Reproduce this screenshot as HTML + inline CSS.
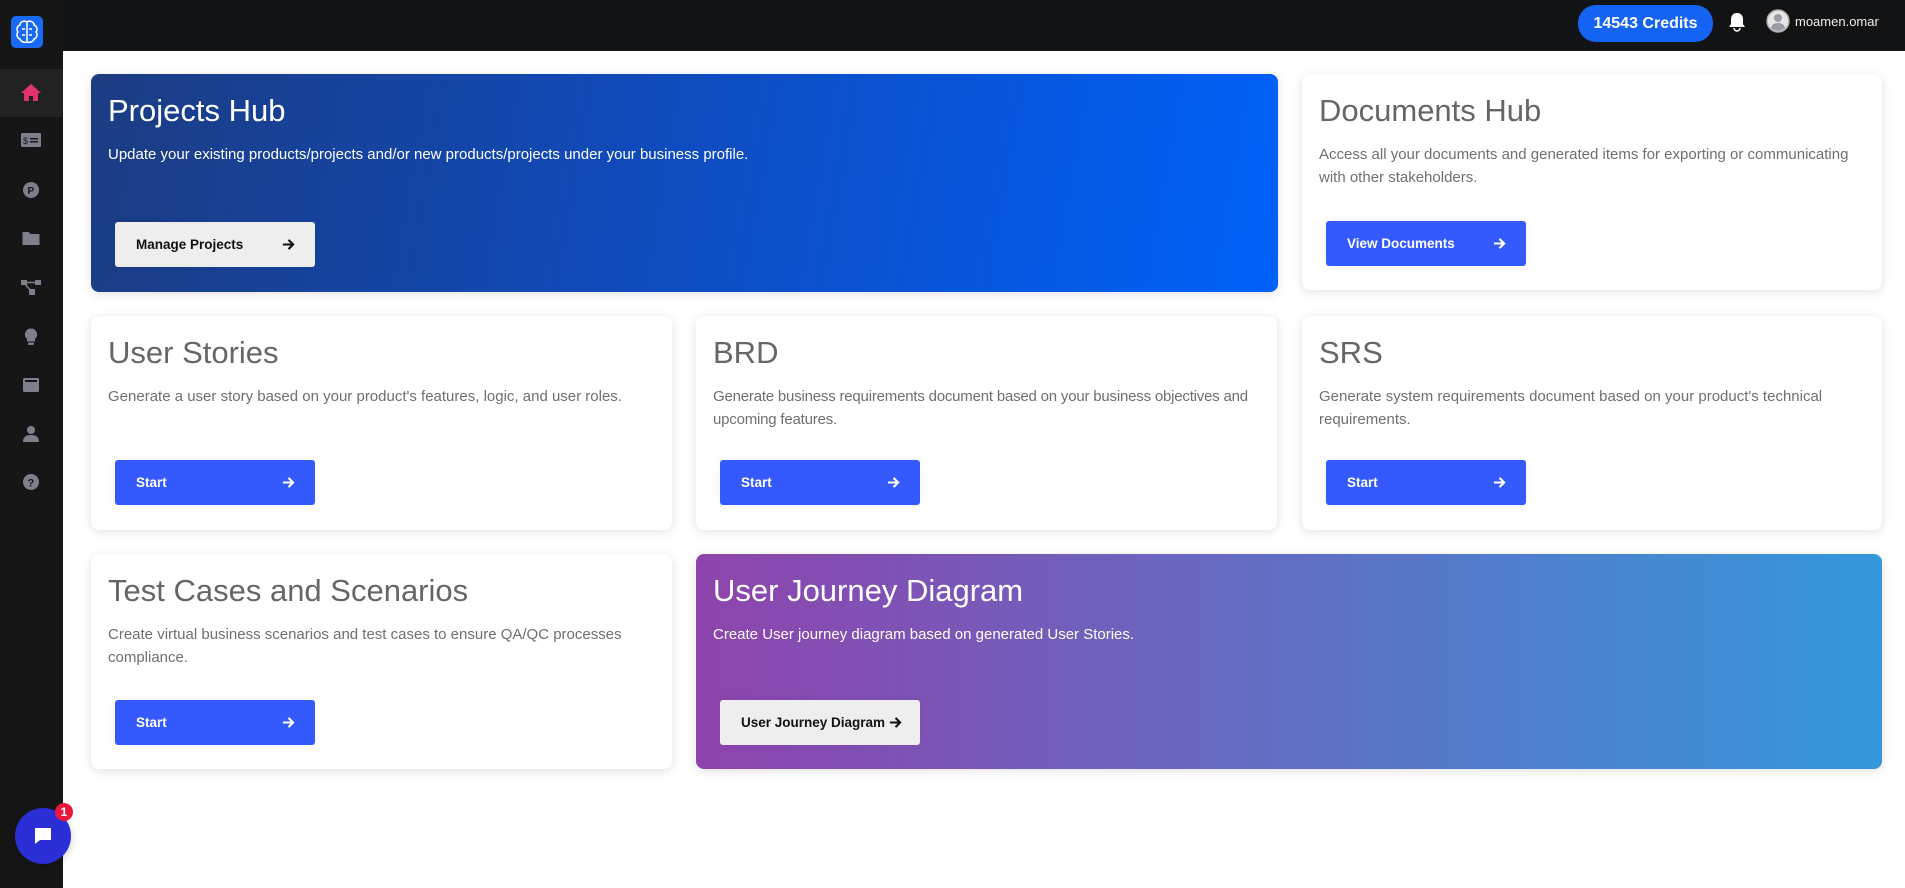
<!DOCTYPE html>
<html><head><meta charset="utf-8"><style>
*{box-sizing:border-box;margin:0;padding:0}
body{width:1905px;height:888px;overflow:hidden;background:#fff;font-family:"Liberation Sans",Arial,sans-serif;position:relative}
.hdr{position:absolute;left:0;top:0;width:1905px;height:51px;background:#121315}
.side{position:absolute;left:0;top:0;width:63px;height:888px;background:#161616}
.card{position:absolute;background:#fff;border-radius:8px;box-shadow:0 2px 10px rgba(0,0,0,.12)}
.card h2{position:absolute;left:17px;top:19px;font-size:31px;font-weight:normal;color:#666;white-space:nowrap}
.card p{position:absolute;left:17px;top:69px;right:8px;font-size:15px;line-height:23px;color:#6f6f6f}
.btn{position:absolute;left:24px;width:200px;height:45px;border-radius:3px;background:#3459fd;color:#fff;font-size:13.5px;font-weight:bold;padding-left:21px;line-height:45px;box-shadow:0 0 10px rgba(0,0,0,.05)}
.btn svg{position:absolute;right:20px;top:16px}
.btn.l{background:#eee;color:#111}
.grad h2,.grad p{color:#fff}
.ico{position:absolute;left:31px;transform:translate(-50%,-50%)}
</style></head><body>
<div class="hdr"></div>
<div class="side"></div>
<div style="position:absolute;left:11px;top:16px;width:32px;height:32px;background:#1a6af5;border-radius:5px"></div>
<svg style="position:absolute;left:13px;top:18px" width="28" height="28" viewBox="0 0 28 28" fill="none" stroke="#fff" stroke-width="1.5"><path d="M14 4v20M14 4c-3-2-7 0-7 3-3 1-4 5-2 7-2 2-1 6 2 7 1 3 5 4 7 3M14 4c3-2 7 0 7 3 3 1 4 5 2 7 2 2 1 6-2 7-1 3-5 4-7 3M9 11h3M16 11h3M9 17h3M16 17h3"/></svg>
<div style="position:absolute;left:0;top:69px;width:63px;height:48px;background:#222"></div>
<svg class="ico" style="top:92px" width="20" height="18" viewBox="0 0 20 18"><path d="M10 1L0 10h3v8h5v-5h4v5h5v-8h3z" fill="#e0336e"/></svg>
<svg class="ico" style="top:140px" width="20" height="14" viewBox="0 0 20 14"><rect width="20" height="14" rx="1" fill="#7d808a"/><text x="2" y="11" font-size="9" fill="#161616" font-family="Liberation Sans">$</text><rect x="9" y="5" width="8" height="1.5" fill="#161616"/><rect x="9" y="8" width="8" height="1.5" fill="#161616"/></svg>
<svg class="ico" style="top:190px" width="16" height="16" viewBox="0 0 16 16"><circle cx="8" cy="8" r="8" fill="#7d808a"/><text x="4.5" y="12" font-size="10" font-weight="bold" fill="#161616" font-family="Liberation Sans">P</text></svg>
<svg class="ico" style="top:238px" width="17" height="14" viewBox="0 0 17 14"><path d="M0 1h6l2 2h9v11H0z" fill="#7d808a"/></svg>
<svg class="ico" style="top:287px" width="20" height="16" viewBox="0 0 20 16"><rect x="0" y="1" width="6" height="5" fill="#7d808a"/><rect x="14" y="1" width="6" height="5" fill="#7d808a"/><rect x="8" y="10" width="6" height="6" fill="#7d808a"/><path d="M6 3.5h8M4 5l6 7" stroke="#7d808a" stroke-width="1.5"/></svg>
<svg class="ico" style="top:337px" width="12" height="17" viewBox="0 0 12 17"><path d="M6 0a6 6 0 0 0-4 10.5V13h8v-2.5A6 6 0 0 0 6 0z" fill="#7d808a"/><rect x="3" y="14" width="6" height="2.5" rx="1" fill="#7d808a"/></svg>
<svg class="ico" style="top:385px" width="16" height="14" viewBox="0 0 16 14"><rect width="16" height="14" rx="1.5" fill="#7d808a"/><rect x="2" y="2" width="12" height="2" fill="#161616"/></svg>
<svg class="ico" style="top:434px" width="16" height="16" viewBox="0 0 16 16"><circle cx="8" cy="4" r="4" fill="#7d808a"/><path d="M0 16c0-5 3-7 8-7s8 2 8 7z" fill="#7d808a"/></svg>
<svg class="ico" style="top:482px" width="16" height="16" viewBox="0 0 16 16"><circle cx="8" cy="8" r="8" fill="#7d808a"/><text x="4.5" y="12.5" font-size="11" font-weight="bold" fill="#161616" font-family="Liberation Sans">?</text></svg>
<div style="position:absolute;left:15px;top:808px;width:56px;height:56px;border-radius:50%;background:#2d2fd6;box-shadow:0 2px 8px rgba(0,0,0,.2)"></div>
<svg style="position:absolute;left:33px;top:826px" width="20" height="20" viewBox="0 0 20 20"><path d="M2 2h16v12H7l-5 4z" fill="#fff"/></svg>
<div style="position:absolute;left:55px;top:803px;width:18px;height:18px;border-radius:50%;background:#e8173c;color:#fff;font-size:12px;font-weight:bold;text-align:center;line-height:18px">1</div>
<div style="position:absolute;left:1578px;top:5px;width:135px;height:37px;border-radius:18px;background:#1463f3;color:#fff;font-weight:bold;font-size:16px;text-align:center;line-height:37px">14543 Credits</div>
<svg style="position:absolute;left:1728px;top:12px" width="18" height="20" viewBox="0 0 18 20"><path d="M9 1c-4 0-6 3-6 6v5l-2 3h16l-2-3V7c0-3-2-6-6-6z" fill="#fff"/><path d="M6 16a3 3 0 0 0 6 0" fill="none" stroke="#fff" stroke-width="1.5"/></svg>
<svg style="position:absolute;left:1766px;top:9px" width="24" height="24" viewBox="0 0 24 24"><circle cx="12" cy="12" r="11" fill="#e6e6e6" stroke="#aaa" stroke-width="1.5"/><circle cx="12" cy="9" r="4" fill="#9a9ca3"/><path d="M5 19c1-4 4-5 7-5s6 1 7 5a10 10 0 0 1-14 0z" fill="#9a9ca3"/></svg>
<div style="position:absolute;left:1795px;top:14px;color:#eee;font-size:13px">moamen.omar</div>

<svg width="0" height="0" style="position:absolute"><defs><symbol id="ar" viewBox="0 0 14 14"><path d="M1 7h11M7 2l5 5-5 5" fill="none" stroke="currentColor" stroke-width="2.2"/></symbol></defs></svg>

<div class="card grad" style="left:91px;top:74px;width:1187px;height:218px;background:linear-gradient(100deg,#1c3c82 0%,#0f4cc0 50%,#0061fa 100%)">
<h2>Projects Hub</h2><p>Update your existing products/projects and/or new products/projects under your business profile.</p>
<div class="btn l" style="top:148px">Manage Projects<svg width="13" height="13"><use href="#ar"/></svg></div></div>

<div class="card" style="left:1302px;top:74px;width:580px;height:216px">
<h2>Documents Hub</h2><p>Access all your documents and generated items for exporting or communicating with other stakeholders.</p>
<div class="btn" style="top:147px">View Documents<svg width="13" height="13"><use href="#ar"/></svg></div></div>

<div class="card" style="left:91px;top:316px;width:581px;height:214px">
<h2>User Stories</h2><p>Generate a user story based on your product's features, logic, and user roles.</p>
<div class="btn" style="top:144px">Start<svg width="13" height="13"><use href="#ar"/></svg></div></div>

<div class="card" style="left:696px;top:316px;width:581px;height:214px">
<h2>BRD</h2><p style="letter-spacing:-0.2px">Generate business requirements document based on your business objectives and upcoming features.</p>
<div class="btn" style="top:144px">Start<svg width="13" height="13"><use href="#ar"/></svg></div></div>

<div class="card" style="left:1302px;top:316px;width:580px;height:214px">
<h2>SRS</h2><p>Generate system requirements document based on your product's technical requirements.</p>
<div class="btn" style="top:144px">Start<svg width="13" height="13"><use href="#ar"/></svg></div></div>

<div class="card" style="left:91px;top:554px;width:581px;height:215px">
<h2>Test Cases and Scenarios</h2><p>Create virtual business scenarios and test cases to ensure QA/QC processes compliance.</p>
<div class="btn" style="top:146px">Start<svg width="13" height="13"><use href="#ar"/></svg></div></div>

<div class="card grad" style="left:696px;top:554px;width:1186px;height:215px;background:linear-gradient(to right,#8e44ad,#3498db)">
<h2>User Journey Diagram</h2><p>Create User journey diagram based on generated User Stories.</p>
<div class="btn l" style="top:146px">User Journey Diagram<svg width="13" height="13" style="right:18px"><use href="#ar"/></svg></div></div>
</body></html>
